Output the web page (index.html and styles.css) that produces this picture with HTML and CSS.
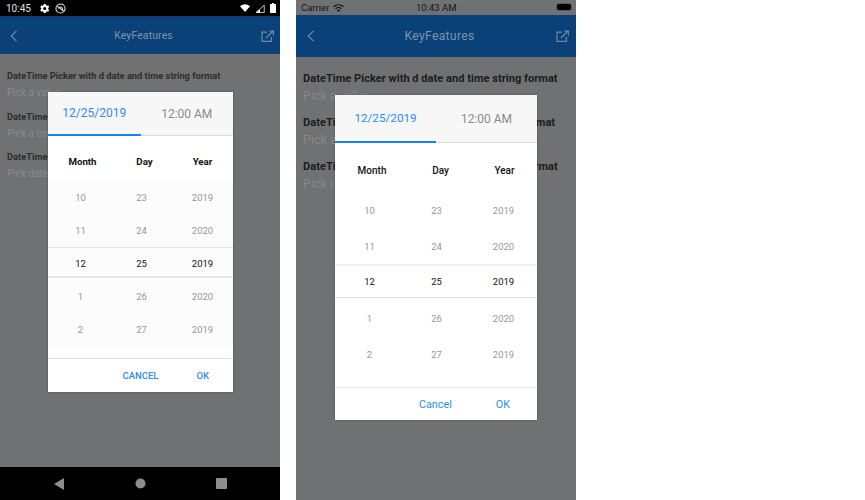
FILE: index.html
```html
<!DOCTYPE html>
<html lang="en">
<head>
  <meta charset="UTF-8">
  <title>DateTime Picker</title>
  <link rel="stylesheet" href="styles.css">
</head>
<body>
  <div class="phone android">
    <div class="statusbar">
      <span class="clock">10:45</span>
      <svg width="11" height="11" viewBox="0 0 24 24"><path fill="#fff" d="M20 13.200a8 8 0 0 0 0-2.400l2.300-1.800-2.300-4-2.800 1.100a8 8 0 0 0-2-1.200L14.800 2h-4.600l-.4 2.900a8 8 0 0 0-2 1.200L5 5 2.700 9 5 10.800a8 8 0 0 0 0 2.400L2.700 15 5 19l2.800-1.100a8 8 0 0 0 2 1.200l.4 2.900h4.600l.4-2.900a8 8 0 0 0 2-1.200L20 19l2.300-4zM12.500 15.500a3.500 3.500 0 1 1 0-7 3.500 3.500 0 0 1 0 7z"/></svg>
      <svg width="11" height="11" viewBox="0 0 24 24" fill="none" stroke="#e8e8e8" stroke-width="2.200"><circle cx="12" cy="12" r="10"/><path d="M5 7l14 11M7.500 12a4.800 4.800 0 0 1 9 0v5"/></svg>
      <span class="spacer"></span>
      <svg width="10" height="8" viewBox="0 0 20 16"><path fill="#fff" d="M0 4.500Q10-3.500 20 4.500L10 16z"/></svg>
      <svg width="10" height="9" viewBox="0 0 20 18"><path fill="none" stroke="#fff" stroke-width="1.500" d="M18.500 2.500V17H2z"/><path fill="#fff" d="M10 10v7H2z"/></svg>
      <svg width="6" height="10" viewBox="0 0 12 20"><path fill="#fff" d="M4 0h4v2h3a1 1 0 0 1 1 1v16a1 1 0 0 1-1 1H1a1 1 0 0 1-1-1V3a1 1 0 0 1 1-1h3z"/></svg>
    </div>
    <header class="appbar">
      <svg width="8" height="12" viewBox="0 0 8 12"><path fill="none" stroke="#6f8aa6" stroke-width="1.200" d="M6.500.8L1.300 6l5.200 5.200"/></svg>
      <span class="appbar-title">KeyFeatures</span>
      <svg width="13" height="12" viewBox="0 0 13 12" fill="none" stroke="#6f8aa6" stroke-width="1.200"><path d="M6 2.200H1v9.200h9.400V7"/><path d="M5 8l7-7M8 1h4.400v4.400"/></svg>
    </header>
    <main class="content">
      <div class="field"><h4>DateTime Picker with d date and time string format</h4><p>Pick a value</p></div>
      <div class="field"><h4>DateTime Picker with t date and time string format</h4><p>Pick a time</p></div>
      <div class="field"><h4>DateTime Picker with g date and time string format</h4><p>Pick date and time</p></div>
    </main>
    <nav class="navbar">
      <svg width="10" height="12" viewBox="0 0 10 12"><path fill="#8e8e8e" d="M10 0v12L0 6z"/></svg>
      <svg width="11" height="11" viewBox="0 0 11 11"><circle cx="5.500" cy="5.500" r="5" fill="#8e8e8e"/></svg>
      <svg width="11" height="11" viewBox="0 0 11 11"><rect width="11" height="11" rx="1" fill="#8e8e8e"/></svg>
    </nav>

    <div class="dialog">
      <div class="tabs">
        <div class="tab active">12/25/2019</div>
        <div class="tab">12:00 AM</div>
      </div>
      <div class="columns"><span>Month</span><span>Day</span><span>Year</span></div>
      <div class="wheel">
        <div class="row"><span>10</span><span>23</span><span>2019</span></div>
        <div class="row"><span>11</span><span>24</span><span>2020</span></div>
        <div class="row selected"><span>12</span><span>25</span><span>2019</span></div>
        <div class="row"><span>1</span><span>26</span><span>2020</span></div>
        <div class="row"><span>2</span><span>27</span><span>2019</span></div>
      </div>
      <div class="actions"><span>CANCEL</span><span>OK</span></div>
    </div>
  </div>

  <div class="phone ios">
    <div class="statusbar">
      <span class="carrier">Carrier</span>
      <svg width="11" height="8" viewBox="0 0 22 16" fill="none" stroke="#111" stroke-width="2.400"><path d="M1 5.500Q11-2.500 21 5.500M5 9.500Q11 4.500 17 9.500"/><path fill="#111" stroke="none" d="M7.500 12Q11 9.500 14.500 12L11 16z"/></svg>
      <span class="clock">10:43 AM</span>
      <span class="battery"></span>
    </div>
    <header class="appbar">
      <svg width="8" height="12" viewBox="0 0 8 12"><path fill="none" stroke="#6f8aa6" stroke-width="1.200" d="M6.500.8L1.300 6l5.200 5.200"/></svg>
      <span class="appbar-title">KeyFeatures</span>
      <svg width="13" height="12" viewBox="0 0 13 12" fill="none" stroke="#6f8aa6" stroke-width="1.200"><path d="M6 2.200H1v9.200h9.400V7"/><path d="M5 8l7-7M8 1h4.400v4.400"/></svg>
    </header>
    <main class="content">
      <div class="field"><h4>DateTime Picker with d date and time string format</h4><p>Pick a value</p></div>
      <div class="field"><h4>DateTime Picker with t date and time string format</h4><p>Pick a time</p></div>
      <div class="field"><h4>DateTime Picker with g date and time string format</h4><p>Pick date</p></div>
    </main>

    <div class="dialog">
      <div class="tabs">
        <div class="tab active">12/25/2019</div>
        <div class="tab">12:00 AM</div>
      </div>
      <div class="columns"><span>Month</span><span>Day</span><span>Year</span></div>
      <div class="wheel">
        <div class="row"><span>10</span><span>23</span><span>2019</span></div>
        <div class="row"><span>11</span><span>24</span><span>2020</span></div>
        <div class="row selected"><span>12</span><span>25</span><span>2019</span></div>
        <div class="row"><span>1</span><span>26</span><span>2020</span></div>
        <div class="row"><span>2</span><span>27</span><span>2019</span></div>
      </div>
      <div class="actions"><span>Cancel</span><span>OK</span></div>
    </div>
  </div>
</body>
</html>
```

FILE: styles.css
```css
html, body {
  height: 100%;
}

body {
  margin: 0;
  background: #fff;
  display: flex;
  gap: 16px;
  overflow: hidden;
  font-family: Roboto, "Liberation Sans", sans-serif;
}

.phone {
  position: relative;
  width: 280px;
  height: 500px;
  display: flex;
  flex-direction: column;
  background: #707172;
  overflow: hidden;
}

/* status bars */
.statusbar {
  display: flex;
  align-items: center;
  flex: none;
}

.android .statusbar {
  height: 16px;
  background: #000;
  color: #e0e0e0;
  padding: 0 4px 0 6px;
  gap: 5px;
  font-size: 10px;
}

.android .statusbar .clock {
  margin-right: 3px;
}

.spacer {
  flex: 1;
}

.ios .statusbar {
  height: 15px;
  position: relative;
  background: #707172;
  color: #151515;
  padding: 0 4px 0 5px;
  gap: 4px;
  font-size: 9.500px;
}

.ios .statusbar .clock {
  position: absolute;
  left: 120px;
  top: 2px;
}

.battery {
  position: absolute;
  right: 5px;
  top: 4px;
  width: 14px;
  height: 6px;
  border-radius: 2px;
  background: #000;
  box-shadow: 0 0 0 1px #5a5a5a;
}

/* app bar */
.appbar {
  flex: none;
  display: flex;
  align-items: center;
  justify-content: space-between;
  background: #0a4179;
  color: #7c92aa;
}

.android .appbar {
  height: 38px;
  padding: 0 6px 0 10px;
  border-top: 1px solid #0a3a6c;
  box-sizing: border-box;
}

.ios .appbar {
  height: 42px;
  padding: 0 7px 0 11px;
}

.appbar-title {
  margin-left: 8px;
  font-size: 10.500px;
  letter-spacing: 0.1px;
}

.ios .appbar-title {
  font-size: 12.200px;
  letter-spacing: 0.3px;
}

/* page behind the dialog */
.content {
  flex: 1;
  padding: 16px 7px 0;
}

.ios .content {
  padding-top: 14px;
}

.field {
  height: 40.500px;
}

.ios .field {
  height: 44px;
}

.field h4 {
  margin: 0;
  font-size: 9.300px;
  line-height: 12px;
  font-weight: 700;
  color: #2d2d2d;
  white-space: nowrap;
}

.ios .field h4 {
  font-size: 11.100px;
  line-height: 16px;
  color: #1c1c1c;
}

.field p {
  margin: 5px 0 0;
  font-size: 10px;
  line-height: 12px;
  color: #8a8a8a;
}

.ios .field p {
  margin-top: 3px;
  font-size: 12.500px;
  color: #878787;
}

.navbar {
  flex: none;
  height: 33px;
  background: #000;
  display: flex;
  align-items: center;
  justify-content: space-between;
  padding: 0 53px 0 54px;
}

/* dialog */
.dialog {
  position: absolute;
  display: flex;
  flex-direction: column;
  background: #fff;
  box-shadow: 0 0 2px rgba(0, 0, 0, 0.35);
}

.android .dialog {
  left: 48px;
  top: 92px;
  width: 185px;
  height: 300px;
}

.ios .dialog {
  left: 39px;
  top: 95px;
  width: 202px;
  height: 325px;
}

.tabs {
  display: flex;
  background: #f7f7f7;
  flex: none;
}

.android .tabs {
  height: 44px;
}

.ios .tabs {
  height: 48px;
}

.tab {
  flex: 1;
  display: flex;
  align-items: center;
  justify-content: center;
  color: #8b8b8b;
  font-size: 12px;
  border-bottom: 1px solid #dcdcdc;
}

.tab.active {
  color: #2a8cf7;
  border-bottom: 2px solid #1a82f7;
}

.ios .tab.active {
  font-size: 11.700px;
}

.columns, .row {
  display: grid;
  text-align: center;
  align-items: center;
}

.columns {
  flex: none;
  font-weight: 700;
  color: #111;
  box-sizing: border-box;
}

.android .columns {
  grid-template-columns: 69px 55px 61px;
  height: 43px;
  padding-top: 7px;
  font-size: 9.700px;
}

.ios .columns {
  grid-template-columns: 74px 63px 65px;
  height: 49px;
  padding-top: 6px;
  font-weight: 500;
  font-size: 10px;
}

.wheel {
  flex: 1;
  display: flex;
  flex-direction: column;
}

.android .wheel {
  padding-top: 2px;
}

.row {
  grid-template-columns: 1fr 1fr 1fr;
  color: #979797;
  font-size: 9.500px;
  flex: none;
}

.android .row {
  height: 33px;
  padding-left: 2px;
  background: #fcfcfc;
}

.ios .row {
  height: 36px;
  padding-left: 1px;
}

.row.selected {
  box-sizing: border-box;
  color: #111;
  border-style: solid;
  border-color: #e4e4e4;
}

.android .row.selected {
  height: 31px;
  margin-bottom: 2px;
  padding-top: 2px;
  border-width: 1px 0 2px;
}

.ios .row.selected {
  height: 34px;
  margin-bottom: 2px;
  border-width: 2px 0 1px;
  border-top-color: #f0f0f0;
}

.actions {
  flex: none;
  box-sizing: border-box;
  display: flex;
  justify-content: flex-end;
  align-items: center;
  border-top: 1px solid #e6e6e1;
  color: #2a8cf7;
}

.android .actions {
  height: 34px;
  gap: 38px;
  padding-right: 24px;
  font-size: 9.500px;
  font-weight: 500;
}

.ios .actions {
  height: 33px;
  gap: 44px;
  padding-right: 27px;
  font-size: 10.800px;
}
```
